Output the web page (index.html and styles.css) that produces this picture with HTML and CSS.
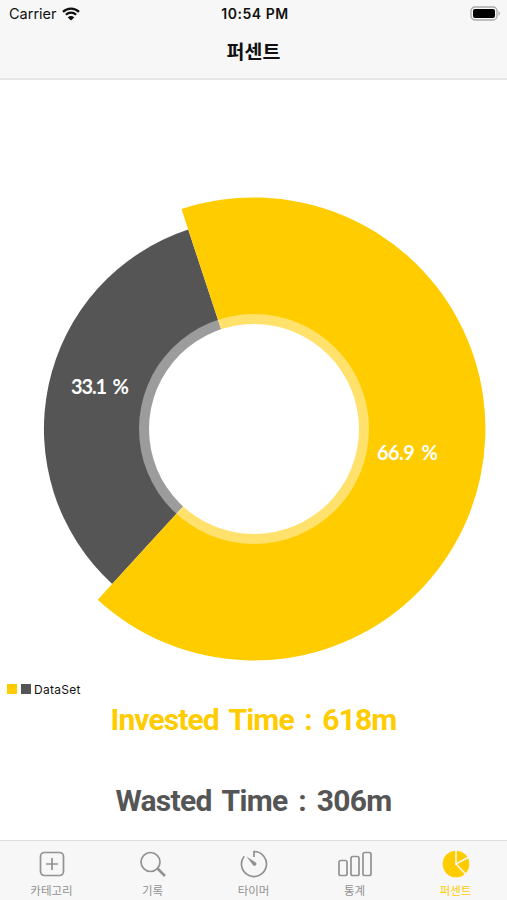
FILE: index.html
```
<!DOCTYPE html>
<html lang="ko">
<head>
  <meta charset="UTF-8">
  <meta name="viewport" content="width=device-width, initial-scale=1.0">
  <title>퍼센트</title>
  <link rel="stylesheet" href="styles.css">
</head>
<body>
  <header class="header">
    <div class="status-bar">
      <div class="carrier">
        <span>Carrier</span>
        <svg class="wifi" viewBox="0 0 18 14" width="18" height="14">
          <path d="M1 4.8a11.5 11.5 0 0 1 16 0M3.9 7.8a7.3 7.3 0 0 1 10.2 0" fill="none" stroke="#111" stroke-width="2.3"/>
          <path d="M9 13.6 5.8 10.4a4.6 4.6 0 0 1 6.4 0z" fill="#111"/>
        </svg>
      </div>
      <span class="clock">10:54 PM</span>
      <svg class="battery" viewBox="0 0 31 16" width="31" height="16">
        <rect x="1" y="1" width="26" height="13" rx="4" fill="#f7f7f7" stroke="#aaa" stroke-width="1.3"/>
        <rect x="3" y="3" width="22" height="9" rx="2" fill="#000"/>
        <path d="M28.5 5.2c1.8.7 1.8 3.9 0 4.6z" fill="#aaa"/>
      </svg>
    </div>
    <h1 class="title">퍼센트</h1>
  </header>

  <main class="content">
    <svg class="chart" viewBox="0 0 507 600" width="507" height="600">
      <path class="wasted" d="M254 349 112.200 503.900A210 210 0 0 1 188.200 149.500z"/>
      <path class="invested" d="M254 349 181.500 129.100A231.500 231.500 0 1 1 97.700 519.800z"/>
      <circle class="hole-ring" cx="254" cy="349" r="115"/>
      <circle class="hole" cx="254" cy="349" r="105"/>
      <text class="value" x="71" y="313.500" textLength="58">33.1 %</text>
      <text class="value" x="377" y="379.500" textLength="61">66.9 %</text>
    </svg>
    <div class="legend">
      <span class="swatch swatch-invested"></span>
      <span class="swatch swatch-wasted"></span>
      <span class="legend-label">DataSet</span>
    </div>
    <p class="total total-invested">Invested Time : 618m</p>
    <p class="total total-wasted">Wasted Time : 306m</p>
  </main>

  <nav class="tab-bar">
    <a class="tab">
      <svg viewBox="0 0 36 30" width="36" height="30">
        <rect x="6.500" y="3.500" width="23" height="23" rx="4"/>
        <path d="M18 9v12M12 15h12"/>
      </svg>
      <span>카테고리</span>
    </a>
    <a class="tab">
      <svg viewBox="0 0 36 30" width="36" height="30">
        <circle cx="15.500" cy="13" r="9.500"/>
        <path d="m22.500 19.500 7.500 7.500" stroke-width="2.600"/>
      </svg>
      <span>기록</span>
    </a>
    <a class="tab">
      <svg viewBox="0 0 36 30" width="36" height="30">
        <path d="M18 8V2.500a12.500 12.500 0 1 1-9.800 4.700"/>
        <path class="needle" d="M10.500 7.500 19.800 13.500a1.900 1.900 0 0 1-2.700 2.700z"/>
      </svg>
      <span>타이머</span>
    </a>
    <a class="tab">
      <svg viewBox="0 0 36 30" width="36" height="30">
        <rect x="2" y="11.500" width="8" height="15" rx="1.800"/>
        <rect x="14" y="7.500" width="8" height="19" rx="1.800"/>
        <rect x="26" y="3.500" width="8" height="23" rx="1.800"/>
      </svg>
      <span>통계</span>
    </a>
    <a class="tab active">
      <svg viewBox="0 0 36 30" width="36" height="30">
        <circle class="pie" cx="18" cy="15" r="13.300"/>
        <path class="cuts" d="M18 1v14l12-6.500M18 15l9.500 10"/>
      </svg>
      <span>퍼센트</span>
    </a>
  </nav>
</body>
</html>
```
FILE: styles.css
```
:root {
  --yellow: #ffcc00;
  --gray: #555555;
  --bar: #f7f7f7;
  --icon: #929292;
}

* {
  margin: 0;
  padding: 0;
  box-sizing: border-box;
}

body {
  height: 900px;
  display: flex;
  flex-direction: column;
  overflow: hidden;
  background: #fff;
  color: #111;
  font-family: Inter, "Noto Sans CJK KR", sans-serif;
}

.header {
  height: 80px;
  background: var(--bar);
  border-bottom: 2px solid #e6e6e6;
}

.status-bar {
  height: 27px;
  padding: 0 6px 0 9px;
  display: grid;
  grid-template-columns: 1fr auto 1fr;
  align-items: center;
  font-size: 14.5px;
}

.carrier {
  display: flex;
  align-items: center;
  gap: 5px;
}

.clock {
  font-size: 14px;
  font-weight: 600;
  letter-spacing: 0.55px;
}

.battery {
  justify-self: end;
}

.title {
  height: 51px;
  line-height: 51px;
  text-align: center;
  font-size: 19.5px;
  font-weight: 700;
}

.content {
  flex: 1;
  display: flex;
  flex-direction: column;
}

.chart {
  display: block;
}

.invested {
  fill: var(--yellow);
}

.wasted {
  fill: var(--gray);
}

.hole-ring {
  fill: rgba(255, 255, 255, 0.42);
}

.hole {
  fill: #fff;
}

.value {
  fill: #fff;
  font-family: Lato, sans-serif;
  font-size: 20px;
  font-weight: 700;
  word-spacing: 3px;
}

.legend {
  height: 18px;
  padding-left: 7px;
  display: flex;
  align-items: center;
  gap: 4px;
  font-size: 12px;
  letter-spacing: 0.3px;
}

.legend-label {
  margin-left: -1px;
}

.swatch {
  width: 10px;
  height: 10px;
}

.swatch-invested {
  background: var(--yellow);
}

.swatch-wasted {
  background: var(--gray);
}

.total {
  height: 44px;
  line-height: 44px;
  text-align: center;
  white-space: nowrap;
  font-family: Roboto, sans-serif;
  font-size: 30px;
  font-weight: 700;
  letter-spacing: -0.9px;
  word-spacing: 4px;
}

.total-invested {
  color: var(--yellow);
}

.total-wasted {
  margin-top: 37px;
  color: var(--gray);
  letter-spacing: -0.7px;
}

.tab-bar {
  height: 60px;
  padding: 0 1px;
  display: flex;
  background: var(--bar);
  border-top: 1px solid #dcdcdc;
}

.tab {
  flex: 1;
  padding-top: 8px;
  display: flex;
  flex-direction: column;
  align-items: center;
  color: var(--icon);
  font-size: 11.5px;
  line-height: 24px;
}

.tab svg {
  flex-shrink: 0;
  fill: none;
  stroke: currentColor;
  stroke-width: 1.7;
}

.tab .needle,
.tab .pie {
  fill: currentColor;
  stroke: none;
}

.tab .cuts {
  stroke: var(--bar);
  stroke-width: 1.5;
}

.tab.active {
  color: var(--yellow);
}
```
